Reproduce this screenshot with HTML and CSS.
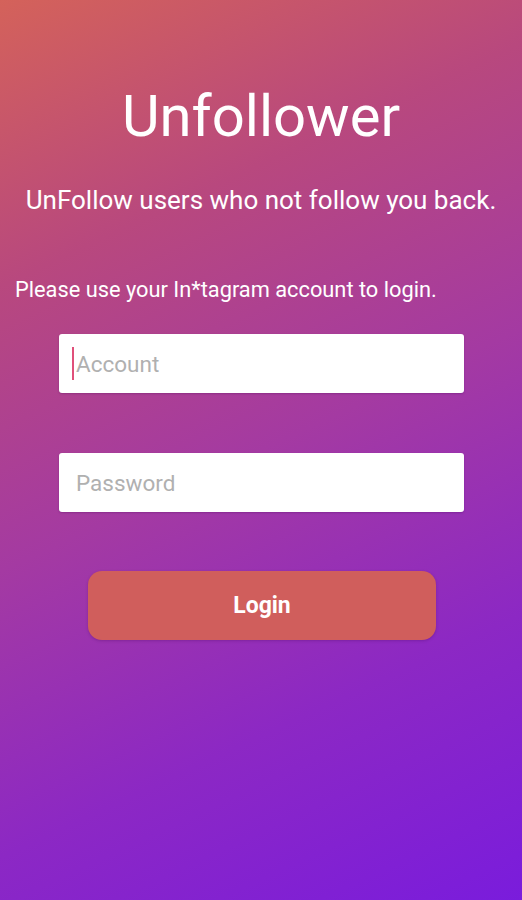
FILE: index.html
```html
<!DOCTYPE html>
<html lang="en">
<head>
    <meta charset="UTF-8">
    <meta name="viewport" content="width=device-width, initial-scale=1.0">
    <title>Unfollower</title>
    <link rel="stylesheet" href="styles.css">
</head>
<body>
    <div class="screen">
        <h1 class="title">Unfollower</h1>
        <p class="subtitle">UnFollow users who not follow you back.</p>
        <p class="hint">Please use your In*tagram account to login.</p>
        <form class="login-form" onsubmit="return false">
            <div class="field">
                <span class="caret"></span>
                <input class="input" type="text" placeholder="Account">
            </div>
            <div class="field">
                <input class="input" type="password" placeholder="Password">
            </div>
            <button class="login-btn" type="submit">Login</button>
        </form>
    </div>
</body>
</html>
```

FILE: styles.css
```css
html, body {
    margin: 0;
    padding: 0;
    height: 100%;
}
body {
    font-family: Roboto, "Noto Sans", Arial, sans-serif;
    color: #fff;
    background: linear-gradient(155deg, #d4625a 0%, #b8487e 25%, #a43aa2 50%, #8c28c4 75%, #7a1cdc 100%);
    min-height: 900px;
}
.screen {
    padding-top: 81px;
}
.title {
    margin: 0;
    text-align: center;
    font-size: 58px;
    font-weight: 400;
    line-height: 70px;
}
.subtitle {
    margin: 33px 0 0;
    text-align: center;
    font-size: 26px;
    line-height: 32px;
}
.hint {
    margin: 61px 0 0;
    padding-left: 15px;
    font-size: 21.8px;
    line-height: 26px;
}
.login-form {
    display: flex;
    flex-direction: column;
    align-items: center;
    margin-top: 31px;
}
.field {
    position: relative;
    width: 405px;
    margin-left: 1px;
    margin-bottom: 60px;
}
.input {
    box-sizing: border-box;
    width: 100%;
    height: 59px;
    border: none;
    border-radius: 3px;
    background: #fff;
    padding: 0 17px;
    font-family: inherit;
    font-size: 22.5px;
    color: #333;
    outline: none;
    box-shadow: 0 1px 2px rgba(60, 0, 80, 0.25);
}
.input::placeholder {
    color: #b0b0b0;
}
.caret {
    position: absolute;
    left: 13px;
    top: 13px;
    width: 2px;
    height: 33px;
    background: #e0507a;
}
.login-btn {
    width: 348px;
    height: 69px;
    margin-top: -1px;
    margin-left: 2px;
    border: none;
    border-radius: 14px;
    background: #d05e5c;
    color: #fff;
    font-family: inherit;
    font-size: 23px;
    font-weight: 700;
    cursor: pointer;
    box-shadow: 0 1px 3px rgba(60, 0, 80, 0.25);
}
```
